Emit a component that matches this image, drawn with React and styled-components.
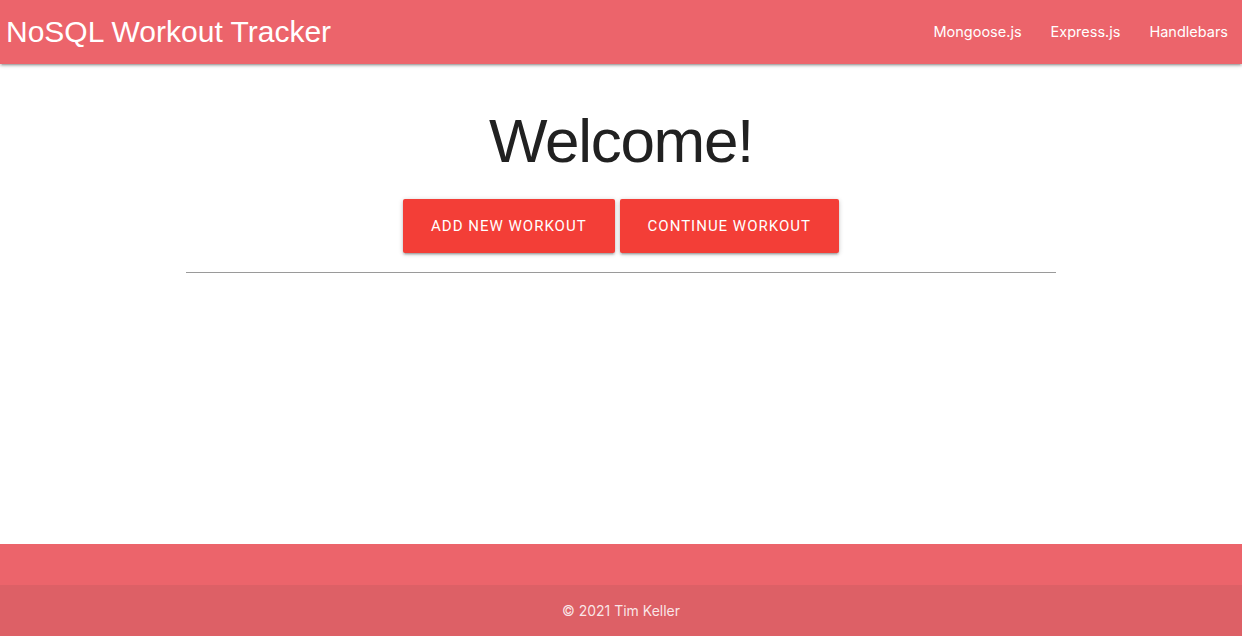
import React from 'react';
import styled, { createGlobalStyle } from 'styled-components';

const GlobalStyle = createGlobalStyle`
  html, body, #root {
    margin: 0;
    padding: 0;
    height: 100%;
  }
  body {
    font-family: Roboto, "Liberation Sans", sans-serif;
    color: rgba(0, 0, 0, 0.87);
    background: #fff;
  }
`;

const Page = styled.div`
  display: flex;
  flex-direction: column;
  min-height: 100vh;
`;

const Nav = styled.nav`
  height: 64px;
  background-color: #ec646b;
  display: flex;
  align-items: center;
  justify-content: space-between;
  box-shadow: 0 2px 2px 0 rgba(0, 0, 0, 0.14), 0 3px 1px -2px rgba(0, 0, 0, 0.12),
    0 1px 5px 0 rgba(0, 0, 0, 0.2);
  position: relative;
  z-index: 2;
`;

const Brand = styled.a`
  font-family: "Liberation Sans", Arial, sans-serif;
  font-size: 30px;
  color: #fff;
  padding-left: 6px;
  text-decoration: none;
`;

const Links = styled.ul`
  display: flex;
  list-style: none;
  margin: 0;
  padding: 0;
`;

const NavLink = styled.a`
  display: block;
  padding: 0 14px 0 15px;
  font-family: Inter, Roboto, sans-serif;
  font-size: 14.5px;
  color: #fff;
  text-decoration: none;
  line-height: 64px;
`;

const Main = styled.main`
  flex: 1;
  display: flex;
  flex-direction: column;
  align-items: center;
`;

const Title = styled.h2`
  font-family: "Liberation Sans", Arial, sans-serif;
  font-weight: 400;
  font-size: 62px;
  letter-spacing: -1.3px;
  color: #212121;
  margin: 46px 0 0;
  line-height: 1;
`;

const ButtonRow = styled.div`
  display: flex;
  gap: 5px;
  margin-top: 27px;
`;

const Button = styled.a`
  height: 54px;
  line-height: 54px;
  padding: 0 28px;
  background-color: #f33e37;
  color: #fff;
  font-family: Roboto, sans-serif;
  font-size: 15px;
  letter-spacing: 1px;
  text-transform: uppercase;
  border-radius: 2px;
  text-decoration: none;
  box-shadow: 0 2px 2px 0 rgba(0, 0, 0, 0.14), 0 3px 1px -2px rgba(0, 0, 0, 0.12),
    0 1px 5px 0 rgba(0, 0, 0, 0.2);
`;

const Rule = styled.hr`
  width: 70%;
  margin: 19px 0 0;
  border: none;
  border-top: 1px solid #9a9a9a;
  height: 0;
`;

const Footer = styled.footer`
  background-color: #ec646b;
  padding-top: 41px;
`;

const Copyright = styled.div`
  height: 51px;
  background-color: rgba(51, 51, 51, 0.08);
  display: flex;
  align-items: center;
  justify-content: center;
  font-family: Inter, Roboto, sans-serif;
  font-size: 14px;
  color: rgba(255, 255, 255, 0.85);
`;

export default function App() {
  return (
    <>
      <GlobalStyle />
      <Page>
        <Nav>
          <Brand href="#">NoSQL Workout Tracker</Brand>
          <Links>
            <li><NavLink href="#">Mongoose.js</NavLink></li>
            <li><NavLink href="#">Express.js</NavLink></li>
            <li><NavLink href="#">Handlebars</NavLink></li>
          </Links>
        </Nav>
        <Main>
          <Title>Welcome!</Title>
          <ButtonRow>
            <Button href="#">Add New Workout</Button>
            <Button href="#">Continue Workout</Button>
          </ButtonRow>
          <Rule />
        </Main>
        <Footer>
          <Copyright>© 2021 Tim Keller</Copyright>
        </Footer>
      </Page>
    </>
  );
}
